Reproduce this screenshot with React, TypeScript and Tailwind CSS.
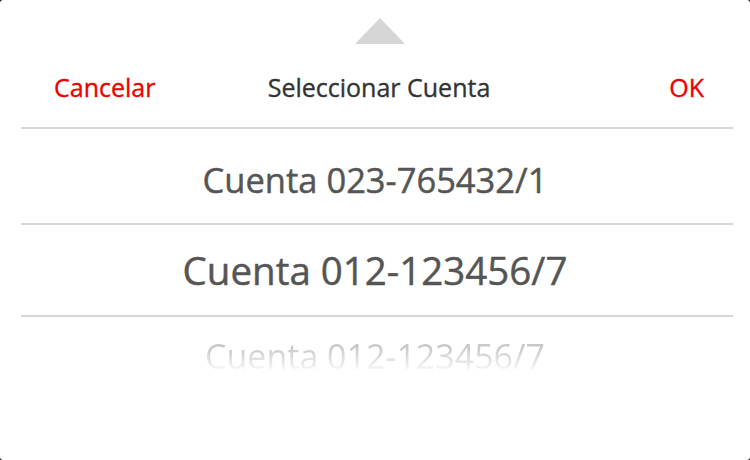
const accounts = [
  { label: "Cuenta 023-765432/1", size: "text-[34.5px] pt-[8px] h-[94px]" },
  { label: "Cuenta 012-123456/7", size: "text-[38.5px] pt-[2px] h-[90px]" },
];

export default function App() {
  return (
    <div className="w-[750px] h-[460px] bg-black" style={{ fontFamily: '"Open Sans", sans-serif' }}>
      <div className="flex h-full flex-col overflow-hidden rounded-[3px] bg-white">
        {/* Arrow */}
        <div className="flex justify-center pt-[18px] pl-[10px]">
          <div className="h-0 w-0 border-x-[25px] border-b-[26px] border-x-transparent border-b-[#d6d6d6]" />
        </div>

        {/* Header */}
        <div className="grid h-[83px] grid-cols-[1fr_auto_1fr] items-center pt-[4px] pl-[54px] pr-[46px] text-[25px] [-webkit-text-stroke:0.35px]">
          <span className="text-[#ee0000]">Cancelar</span>
          <span className="text-[#333]">Seleccionar Cuenta</span>
          <span className="text-right text-[#ee0000]">OK</span>
        </div>
        <div className="ml-[21px] h-[2px] w-[712px] bg-[#d6d6d6]" />

        {/* Picker */}
        {accounts.map((a, i) => (
          <div key={i}>
            <div className={`flex items-center justify-center text-[#555] [-webkit-text-stroke:0.45px] ${a.size}`}>
              {a.label}
            </div>
            <div className="ml-[21px] h-[2px] w-[712px] bg-[#d6d6d6]" />
          </div>
        ))}
        <div className="flex h-[52px] items-start justify-center overflow-hidden pt-[22px]">
          <span className="-mt-[5px] bg-gradient-to-b from-[#c8c8c8] from-30% to-white to-90% bg-clip-text text-[34px] leading-[44px] text-transparent">
            Cuenta 012-123456/7
          </span>
        </div>
      </div>
    </div>
  );
}
